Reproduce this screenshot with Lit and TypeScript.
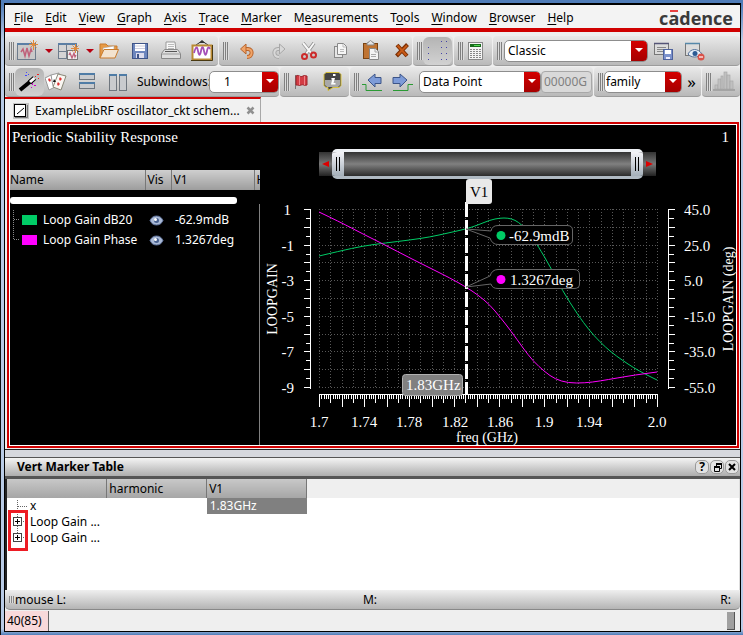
import { LitElement, html, svg, css } from "lit";
import { customElement, property } from "lit/decorators.js";

const range = (n: number) => Array.from({ length: n }, (_, i) => i);

const icons: Record<string, any> = {
  newWindow: svg`<rect x="1.500" y="3.500" width="18" height="16" fill="#c9c9c9" stroke="#6e7c8c"/><path d="M1 4h19" stroke="#5b7fa5" stroke-width="2"/><path d="M5 12l2-3 2 7 2-8 2 8 2-7 1 3" fill="none" stroke="#c0607a" stroke-width="1.500"/><path d="M17.500 0v10M13 4.500h9M14.500 1.500l6 6M20.500 1.500l-6 6" stroke="#e08a3c"/>`,
  newSub: svg`<rect x="1.500" y="3.500" width="18" height="15" fill="#d4d4d4" stroke="#6e7c8c"/><path d="M1 4h19" stroke="#5b7fa5" stroke-width="2"/><path d="M9.500 4v14M2 11.500h18" stroke="#6e7c8c"/><rect x="10.500" y="10.500" width="10" height="9" fill="#eee" stroke="#777"/><path d="M12 15l1-2 2 5 2-5 1 4 1-2" fill="none" stroke="#c0607a" stroke-width="1.300"/><path d="M18.500 4v9M14 8.500h8M15.500 5.500l6 6M21.500 5.500l-6 6" stroke="#e08a3c"/>`,
  folder: svg`<path d="M2 18V4h6l2 2h9v4" fill="#e79a45" stroke="#c97b2c"/><path d="M5 8l11-2v8H5z" fill="#fff" stroke="#aaa" stroke-width=".6"/><path d="M2 18L6 9.500h14.500L17 18z" fill="#f3e3cf" stroke="#c97b2c"/>`,
  save: svg`<rect x="3.500" y="3.500" width="15" height="15" fill="#6d86bd" stroke="#3f5488"/><rect x="6" y="4" width="10" height="7" fill="#fff"/><path d="M6 6h10M6 8.500h10" stroke="#ccd"/><rect x="7" y="13" width="8" height="5" fill="#dde"/><rect x="8" y="14" width="2" height="4" fill="#3f5488"/>`,
  print: svg`<path d="M6 11V2h9l1 9z" fill="#f8f8f8" stroke="#999"/><path d="M8 4.500h6M8 6.500h6M8 8.500h6" stroke="#bbb"/><path d="M1.500 13.500l3-4h13l3 4v5h-19z" fill="#dedede" stroke="#888"/><path d="M2 14h18" stroke="#999"/><path d="M5 11.500h12" stroke="#555"/>`,
  picture: svg`<path d="M5 5l6-4 6 4" stroke="#333" fill="none"/><path d="M8 3l3-3 3 3z" fill="#333"/><rect x="1.500" y="5.500" width="19" height="14" fill="#fff" stroke="#b98a34" stroke-width="2"/><path d="M0 20.500h21.500V5" stroke="#4a3a12" fill="none"/><path d="M3 13c2-7 3-7 4-2s2 5 3 0 2-5 3 0 2 5 3 0 2-4 3-2" fill="none" stroke="#a450b8" stroke-width="1.800"/>`,
  undo: svg`<path d="M7 9h5c5 0 5 8-1 8" fill="none" stroke="#b8642c" stroke-width="4"/><path d="M7 9h5c5 0 5 8-1 8" fill="none" stroke="#f0a468" stroke-width="2"/><path d="M4.500 9l5.500-5v10z" fill="#f0a468" stroke="#b8642c"/>`,
  redo: svg`<path d="M16 9h-5c-5 0-5 8 1 8" fill="none" stroke="#a8a8a8" stroke-width="4"/><path d="M16 9h-5c-5 0-5 8 1 8" fill="none" stroke="#d8d8d8" stroke-width="2"/><path d="M18 9l-5.500-5v10z" fill="#d8d8d8" stroke="#a8a8a8"/>`,
  cut: svg`<path d="M5 3l9 11M16 3L8 14" stroke="#8a8a8a" stroke-width="3.500"/><path d="M5 3l9 11M16 3L8 14" stroke="#f8f8f8" stroke-width="2"/><circle cx="6.500" cy="16.500" r="2.500" fill="none" stroke="#cc2a2a" stroke-width="2"/><circle cx="15.500" cy="15" r="2.500" fill="none" stroke="#cc2a2a" stroke-width="2"/>`,
  copy: svg`<rect x="5.500" y="6.500" width="8" height="11" fill="#e6e6e6" stroke="#888"/><path d="M8.500 3.500h6l3 3v8h-9z" fill="#f6f6f6" stroke="#888"/><path d="M14 4v3h3M11 9.500h4M11 11.500h4" stroke="#bbb" fill="none"/>`,
  paste: svg`<rect x="3.500" y="3.500" width="14" height="15" fill="#bf7433" stroke="#7a4312"/><path d="M7 5V3l2-1c1-2 2-2 3 0l2 1v2z" fill="#e4e4e4" stroke="#888"/><path d="M9.500 8.500h6l3 3v8h-9z" fill="#f4f4f4" stroke="#888"/><path d="M15 9v3h3M11 14.500h5M11 16.500h5" stroke="#aaa" fill="none"/>`,
  remove: svg`<path d="M6 5l10 11M16.500 4.500L5.500 16" stroke="#7c2f04" stroke-width="4"/><path d="M6.500 5.500l9 10M16 5.500L6.500 15" stroke="#c75a17" stroke-width="2"/>`,
  grid: svg`<g fill="#4444a8">${[[18, 0], [13, 0], [0, 6], [13, 6], [18, 6], [0, 12], [13, 12], [18, 12], [0, 18], [13, 18], [18, 18]].map(([x, y]) => svg`<rect x=${x + 2} y=${y + 1} width="1" height="1"/>`)}</g>`,
  calc: svg`<rect x="3.500" y="2.500" width="14" height="17" fill="#f4f4f4" stroke="#888"/><rect x="5" y="4" width="11" height="3" fill="#176b1c"/><path d="M9 5.500h6" stroke="#5d5"/><g stroke="#888" stroke-dasharray="2 1">${[9.5, 11.5, 13.5, 15.5, 17.5].map((y) => svg`<path d="M5 ${y}h11"/>`)}</g>`,
  formSave: svg`<rect x="1.500" y="3.500" width="14" height="11" fill="#dcdcdc" stroke="#777"/><path d="M1 3.500h15" stroke="#557" stroke-width="1.500"/><path d="M4 7.500h9M4 9.500h9M4 11.500h6" stroke="#888"/><rect x="10.500" y="9.500" width="9" height="10" fill="#7c92cc" stroke="#4e629c"/><path d="M12 10h6v4h-6z" fill="#fff"/><path d="M13 17h4v2h-4z" fill="#eef"/>`,
  formEye: svg`<rect x="1.500" y="3.500" width="14" height="12" fill="#dcdcdc" stroke="#777"/><path d="M1 3.500h15" stroke="#58a" stroke-width="1.500"/><path d="M4 14c3-6 10-6 14 0-4 4-11 4-14 0z" fill="#e6eef8" stroke="#56739b"/><circle cx="11" cy="13.500" r="2.500" fill="#2c5a94"/><circle cx="17" cy="17" r="3.500" fill="#d9534a"/><path d="M15 17h4" stroke="#fff" stroke-width="1.200"/>`,
  wand: svg`<path d="M2 19L13 10" stroke="#000" stroke-width="4"/><path d="M11.500 11.500l5-4.500" stroke="#000" stroke-width="5"/><path d="M12 11l4.500-4" stroke="#fff" stroke-width="3"/><g fill="#44f"><rect x="8" y="1" width="1" height="1"/><rect x="10" y="3" width="1" height="1"/><rect x="7" y="4" width="2" height="1"/></g><g fill="#e22"><rect x="19" y="3" width="2" height="1"/><rect x="17" y="5" width="1" height="1"/><rect x="20" y="7" width="1" height="1"/></g><g fill="#c0c"><rect x="14" y="12" width="1" height="2"/><rect x="16" y="14" width="2" height="1"/><rect x="13" y="16" width="1" height="1"/></g>`,
  cards: svg`<path d="M0 7l6-3 4 12-6 3z" fill="#fff" stroke="#999"/><path d="M6 4l8-2v12l-6 1z" fill="#fff" stroke="#999"/><path d="M13 3l8 2-5 14-8-3z" fill="#faf6f2" stroke="#887"/><path d="M4 7l2 2-1 2-2-2zM15 6l2 2-2 2-1-2zM13 11l2 2-2 2-1-2z" fill="#d33"/><path d="M9 8l2 3H8z" fill="#111"/>`,
  rows: svg`<g fill="#c9cbce" stroke="#6f767e"><rect x="3.500" y="2.500" width="15" height="6"/><rect x="3.500" y="11.500" width="15" height="6"/></g><path d="M3 3h16M3 12h16" stroke="#4f7ca6" stroke-width="2"/>`,
  cols: svg`<g fill="#c9cbce" stroke="#6f767e"><rect x="2.500" y="3.500" width="7" height="16"/><rect x="12.500" y="3.500" width="7" height="16"/></g><path d="M2 4h8M12 4h8" stroke="#4f7ca6" stroke-width="2"/>`,
  flag: svg`<path d="M4.500 4v14" stroke="#777"/><path d="M5 5c3-2 4 2 7 0 2-1 3 0 4 0v9c-3 1-4-1-6 0s-3 0-5 0z" fill="#d23c44" stroke="#9b2228"/><path d="M8.500 5v9M13.500 5v9" stroke="#ee8288"/>`,
  info: svg`<path d="M4 1.500h13l2 2v11l-2 2h-6l-5 3v-3H4l-2-2v-11z" fill="#444" stroke="#d9c23c"/><path d="M3 9h15v5l-2 2H5l-2-2z" fill="#a8a8a8"/><path d="M11 3h2.500v2H11zM9.500 7h3.500l-1.500 5h2v1.500H9l1.200-5h-1z" fill="#fff"/>`,
  back: svg`<path d="M1 13.500h4v6h16" fill="none" stroke="#2a9a34"/><path d="M7 9l7-6v3.500h6v6h-6V16z" fill="#7d9bd8" stroke="#3c5488"/>`,
  forward: svg`<path d="M1 19.500h15v-6h5" fill="none" stroke="#2a9a34"/><path d="M15 9L8 3v3.500H1v6h7V16z" fill="#7d9bd8" stroke="#3c5488"/>`,
  histogram: svg`<path d="M0 19h22" stroke="#a4a4a4" stroke-width="2"/><g fill="#c0c0c0" stroke="#a4a4a4" stroke-width=".6"><rect x="2" y="14" width="3" height="4"/><rect x="5" y="8" width="3" height="10"/><rect x="8" y="5" width="2" height="13"/><rect x="11" y="1" width="3" height="17"/><rect x="14" y="4" width="3" height="14"/><rect x="17" y="10" width="3" height="8"/></g>`,
};

const tool = (name: string, label: string, cls = "") =>
  html`<button class="tool ${cls}" aria-label=${label}><svg viewBox="0 0 22 22" width="22" height="22" fill="none" aria-hidden="true">${icons[name]}</svg></button>`;
const arrow = (label: string) =>
  html`<button class="arrow" aria-label=${label}><svg width="8" height="4" aria-hidden="true"><path d="M0 0h8l-4 4z" fill="#b80010"/></svg></button>`;

const controls = css`
  :host { display: block; }
  button { border: 0; padding: 0; margin: 0; background: none; font: inherit; color: inherit; }
  svg { display: block; flex: none; }
`;

@customElement("drop-list")
export class DropList extends LitElement {
  @property() label = "";
  @property() value = "";
  static styles = css`
    :host { display: block; position: relative; height: 22px; }
    select {
      appearance: none; box-sizing: border-box; width: 100%; height: 22px; border: 1px solid #8d8d8d;
      border-radius: 5px; background: #fff; color: #000; font: inherit; padding: 0 18px 0 var(--inset, 3px);
    }
    .cap {
      position: absolute; right: 1px; top: 1px; bottom: 1px; width: 16px; pointer-events: none;
      background: linear-gradient(#d40000, #a60000); border-radius: 0 4px 4px 0; display: grid; place-items: center;
    }
  `;
  render() {
    return html`<select aria-label=${this.label}><option>${this.value}</option></select>
      <span class="cap"><svg width="8" height="5" aria-hidden="true"><path d="M0 0h8l-4 4z" fill="#fff"/></svg></span>`;
  }
}

@customElement("menu-bar")
export class MenuBar extends LitElement {
  static styles = [controls, css`
    nav { display: flex; align-items: center; height: 21px; padding: 2px 7px 0 9px; gap: 12px; background: #f3f3f3; border-bottom: 4px solid #d00000; }
    u { text-underline-offset: 2px; }
    .logo { margin-left: auto; font: bold 18px/20px "Open Sans", sans-serif; color: #3a3a3a; }
    .bar { position: relative; }
    .bar::before { content: ""; position: absolute; left: 2px; right: 1px; top: 4px; height: 2px; background: #e84040; }
  `];
  items: [string, number][] = [["File", 0], ["Edit", 0], ["View", 0], ["Graph", 0], ["Axis", 0], ["Trace", 0], ["Marker", 0], ["Measurements", 1], ["Tools", 1], ["Window", 0], ["Browser", 0], ["Help", 0]];
  render() {
    return html`<nav>
      ${this.items.map(([t, k]) => html`<button>${t.slice(0, k)}<u>${t[k]}</u>${t.slice(k + 1)}</button>`)}
      <span class="logo">c<span class="bar">a</span>dence</span>
    </nav>`;
  }
}

@customElement("tool-bars")
export class ToolBars extends LitElement {
  static styles = [controls, css`
    :host { padding-top: 4px; }
    .row { display: flex; gap: 1px; height: 30px; }
    .row + .row { margin-top: 1px; }
    .group {
      display: flex; align-items: center; box-sizing: border-box; flex: none; padding-left: 4px;
      border-bottom: 1px solid #9c9c9c; border-radius: 4px; background: linear-gradient(#e9e9e9, #b9b9b9);
    }
    .set { display: flex; }
    .spaced { gap: 6px; }
    .fill { flex: 1; }
    .grip { width: 6px; height: 18px; flex: none; background: repeating-linear-gradient(90deg, #808080 0 1px, #dcdcdc 1px 2px); }
    .tool { width: 25px; height: 28px; padding-left: 1px; display: grid; align-items: center; justify-items: start; flex: none; }
    .arrow { width: 16px; height: 28px; padding-left: 5px; flex: none; }
    .pressed { width: 29px; padding-left: 3px; border-radius: 6px; background: linear-gradient(#b4b4b4, #d2d2d2); }
    .a1 { width: 213px; } .b1 { width: 193px; } .c1 { width: 40px; } .d1 { width: 38px; }
    .a2 { width: 274px; } .b2 { width: 69px; } .c2 { width: 243px; } .d2 { width: 107px; }
    .wide { width: 144px; margin: 0 4px 0 1px; }
    .count { width: 70px; --inset: 14px; flex: none; }
    .points { width: 122px; margin-left: 3px; }
    .fam { width: 84px; --inset: 1px; }
    .field {
      width: 51px; height: 22px; box-sizing: border-box; border: 1px solid #a8a8a8; border-radius: 4px; padding: 0 2px;
      background: #d9d9d9; color: #808080; font: inherit;
    }
    .more { width: 20px; font-size: 17px; line-height: 20px; }
    .label { padding-left: 6px; width: 78px; box-sizing: border-box; white-space: nowrap; flex: none; }
  `];
  render() {
    const grip = html`<span class="grip"></span>`;
    return html`
      <div class="row" role="toolbar" aria-label="Main">
        <div class="group a1">
          ${grip}${tool("newWindow", "New window")}${arrow("New window options")}${tool("newSub", "New subwindow")}${arrow("Subwindow options")}
          <div class="set spaced">
            ${tool("folder", "Open")}${tool("save", "Save")}${tool("print", "Print")}${tool("picture", "Save image")}
          </div>
        </div>
        <div class="group b1 spaced">
          ${grip}<div class="set spaced">${tool("undo", "Undo")}${tool("redo", "Redo")}${tool("cut", "Cut")}${tool("copy", "Copy")}${tool("paste", "Paste")}${tool("remove", "Delete")}</div>
        </div>
        <div class="group c1">${grip}${tool("grid", "Grid", "pressed")}</div>
        <div class="group d1">${grip}${tool("calc", "Calculator")}</div>
        <div class="group fill">
          ${grip}<drop-list class="wide" label="Workspace" value="Classic"></drop-list>
          <div class="set spaced">${tool("formSave", "Save workspace")}${tool("formEye", "Hide workspace")}</div>
        </div>
      </div>
      <div class="row" role="toolbar" aria-label="Windows">
        <div class="group a2">
          ${grip}${tool("wand", "Assistant", "pressed")}
          <div class="set spaced">${tool("cards", "Cards")}${tool("rows", "Split rows")}${tool("cols", "Split columns")}</div>
          <span class="label">Subwindows:</span>
          <drop-list class="count" label="Subwindows" value="1"></drop-list>
        </div>
        <div class="group b2">${grip}<div class="set spaced">${tool("flag", "Flag")}${tool("info", "Information")}</div></div>
        <div class="group c2">
          ${grip}<div class="set spaced">${tool("back", "Previous point")}${tool("forward", "Next point")}</div>
          <drop-list class="points" label="Step by" value="Data Point"></drop-list>
          <input class="field" aria-label="Step" value="00000G" disabled />
        </div>
        <div class="group d2">${grip}<drop-list class="fam" label="Group by" value="family"></drop-list><button class="more" aria-label="More tools">»</button></div>
        <div class="group fill">${grip}${tool("histogram", "Histogram")}</div>
      </div>`;
  }
}

const X0 = 319, X1 = 657, Y0 = 209, Y1 = 387;
type Point = [number, number];
const gain: Point[] = [[319, 256], [340, 251], [363, 246], [385, 243], [410, 240], [430, 237], [448, 233], [466, 229], [478, 225], [490, 220], [500, 218], [508, 218], [515, 220], [522, 225], [530, 234], [538, 246], [551, 268], [562, 290], [578, 315], [589, 330], [600, 342], [611, 352], [622, 360], [634, 368], [645, 374], [657, 380]];
const phase: Point[] = [[319, 212], [340, 222], [363, 234], [385, 245], [410, 258], [430, 268], [450, 278], [466, 287], [478, 295], [490, 305], [500, 317], [511, 331], [523, 348], [533, 361], [545, 372], [555, 379], [568, 383], [585, 383], [600, 381], [617, 378], [635, 375], [657, 372]];

/** Smooth curve through the midpoints of consecutive samples. */
const curve = (p: Point[]) =>
  `M${p[0]}` + p.slice(1, -1).map(([x, y], i) => {
    const [nx, ny] = p[i + 2];
    return `Q${x} ${y} ${(x + nx) / 2} ${(y + ny) / 2}`;
  }).join("") + `L${p[p.length - 1]}`;

@customElement("trace-plot")
export class TracePlot extends LitElement {
  static styles = [controls, css`
    .top { display: flex; justify-content: flex-end; padding: 4px 7px 0; height: 20px; }
    .zoom { display: flex; align-items: center; margin: 0 80px 0 59px; height: 30px; }
    .end { width: 13px; height: 24px; flex: none; display: grid; place-items: center; background: linear-gradient(#333, #777 50%, #222); }
    .track {
      flex: 1; display: flex; justify-content: space-between; height: 30px; box-sizing: border-box; border: solid #b0bac3;
      border-width: 3px 0; border-top-color: #eef1f5; border-radius: 5px; overflow: hidden; background: linear-gradient(#333, #808080 50%, #2c2c2c);
    }
    .thumb { width: 12px; height: 24px; display: grid; place-items: center; background: linear-gradient(#f4f4f8, #a4afb9); }
    .plot { width: 100%; height: auto; font-size: 15px; fill: #fff; }
    .dots { stroke: #585858; stroke-dasharray: 1 2; }
    .axis { stroke: #fff; fill: none; }
    .gain { stroke: #0c6; fill: none; }
    .phase { stroke: #f0f; fill: none; }
    .callout { fill: #000; stroke: #666; }
    .small { font-size: 14px; }
  `];
  render() {
    const bars = html`<svg width="6" height="14" aria-hidden="true"><path d="M1.500 0v14M4.500 0v14" stroke="#000"/></svg>`;
    const px = (i: number, n: number) => Math.round(X0 + ((X1 - X0) * i) / n) + 0.5;
    const py = (i: number, n: number) => Math.round(Y0 + ((Y1 - Y0) * i) / n) + 0.5;
    return html`
      <div class="top">1</div>
      <div class="zoom">
        <button class="end" aria-label="Scroll left"><svg width="7" height="6"><path d="M0 3l7-3v6z" fill="#d00"/></svg></button>
        <div class="track"><button class="thumb" aria-label="Range start">${bars}</button><button class="thumb" aria-label="Range end">${bars}</button></div>
        <button class="end" aria-label="Scroll right"><svg width="7" height="6"><path d="M7 3l-7-3v6z" fill="#d00"/></svg></button>
      </div>
      <svg class="plot" viewBox="260 179 476 266" role="img" aria-label="Loop gain and phase against frequency">
        <g class="dots">
          ${range(31).map((i) => svg`<path d="M${px(i, 30)} ${Y0}V${Y1}"/>`)}
          ${range(11).map((i) => svg`<path d="M${X0} ${py(i, 10)}H${X1}"/>`)}
        </g>
        <g class="axis">
          <path d="M310.500 209V389M668.500 209V389"/>
          ${range(21).map((i) => svg`<path d="M${i % 2 ? 306 : 304} ${py(i, 20)}H310M669 ${py(i, 20)}H${i % 2 ? 674 : 675}"/>`)}
          <path d="M319 394.500H658"/>
          ${range(151).map((i) => svg`<path d="M${px(i, 150)} 395V${i % 10 === 0 ? 407 : i % 5 === 0 ? 403 : 399}"/>`)}
        </g>
        <path class="gain" d=${curve(gain)}/>
        <path class="phase" d=${curve(phase)}/>
        <path d="M466.500 202V395" stroke="#fff" stroke-width="3" stroke-dasharray="15 3"/>
        <path class="callout" d="M466 229L491 231Q492 225.500 498 225.500H567Q572.500 225.500 572.500 230V240Q572.500 244.500 567 244.500H498Q492 244.500 490 238Z"/>
        <path class="callout" d="M466 287L490 276Q492 269.500 498 269.500H574Q579.500 269.500 579.500 275V284Q579.500 288.500 574 288.500H498Q492 288.500 491 284Z"/>
        <circle cx="501" cy="235.500" r="4.500" fill="#0c6"/>
        <circle cx="501" cy="279.500" r="4.500" fill="#f0f"/>
        <text x="509" y="241">-62.9mdB</text>
        <text x="510" y="285">1.3267deg</text>
        <path d="M466 182Q466 179 469 179H489Q492 179 492 182V201Q492 204 489 204H466Z" fill="#e9e9e9"/>
        <text x="470" y="197" fill="#000">V1</text>
        <rect x="402.500" y="374.500" width="60" height="21" rx="3" fill="#808080" stroke="#b0b0b0"/>
        <text x="406" y="390">1.83GHz</text>
        ${["1", "-1", "-3", "-5", "-7", "-9"].map((t, i) => svg`<text x=${i ? 294 : 291} y=${Math.round(215 + i * 35.6)} text-anchor="end">${t}</text>`)}
        ${["45.0", "25.0", "5.0", "-15.0", "-35.0", "-55.0"].map((t, i) => svg`<text x="684" y=${Math.round(215 + i * 35.6)}>${t}</text>`)}
        ${[["1.7", 319], ["1.74", 364], ["1.78", 409], ["1.82", 455], ["1.86", 500], ["1.9", 544], ["1.94", 589], ["2.0", 657]].map(([t, x]) => svg`<text x=${x} y="427" text-anchor="middle">${t}</text>`)}
        <text x="487" y="442" text-anchor="middle" class="small">freq (GHz)</text>
        <text class="small" text-anchor="middle" transform="translate(277 299) rotate(-90)">LOOPGAIN</text>
        <text class="small" text-anchor="middle" transform="translate(733 299) rotate(-90)">LOOPGAIN (deg)</text>
      </svg>`;
  }
}

@customElement("trace-window")
export class TraceWindow extends LitElement {
  static styles = [controls, css`
    .tabs { display: flex; height: 25px; background: #efefef; }
    .tab {
      display: flex; align-items: center; gap: 6px; box-sizing: border-box; width: 256px; padding: 0 9px 0 8px;
      border-top: 2px solid #d00000; border-right: 1px solid #a8a8a8; background: #f1f1f1; white-space: nowrap;
    }
    .tab button { margin-left: auto; }
    .frame {
      display: grid; grid-template-columns: 250px 1fr; margin: 0 1px 1px 2px; border: 2px solid #d00000; outline: 1px solid #fff; outline-offset: -3px;
      background: #000; color: #fff; font-family: "Liberation Serif", serif; font-size: 15px; line-height: 16px; padding: 1px;
    }
    .list { display: flex; flex-direction: column; }
    h2 { margin: 0; padding: 4px 2px 0; height: 41px; font-size: 15px; font-weight: normal; }
    table { border-collapse: collapse; table-layout: fixed; width: 100%; font: 12px/20px "Noto Sans", sans-serif; }
    th { height: 20px; padding: 0 0 0 2px; font-weight: normal; text-align: left; color: #000; overflow: hidden; white-space: nowrap; background: linear-gradient(#cfcfcf, #9d9d9d); border-left: 1px solid #777; }
    th:first-child { border: 0; padding: 0; }
    .head { margin-bottom: 7px; }
    .n { width: 135px; } .v { width: 26px; } .m { width: 83px; }
    td { padding: 0 0 0 4px; height: 20px; white-space: nowrap; }
    .rule { width: 227px; height: 7px; background: #fff; border-radius: 3px; }
    .body { flex: 1; border-right: 1px solid #808080; padding-top: 6px; }
    .name { display: flex; align-items: center; }
    .swatch { width: 15px; height: 10px; margin-right: 6px; }
    td.trace { padding: 0; }
  `];
  @property({ attribute: false }) rows = [["#00cc66", "Loop Gain dB20", "-62.9mdB"], ["#ff00ff", "Loop Gain Phase", "1.3267deg"]];
  render() {
    const cols = html`<colgroup><col class="n" /><col class="v" /><col class="m" /><col /></colgroup>`;
    return html`
      <div class="tabs"><div class="tab">
        <svg width="16" height="16" viewBox="0 0 16 16" aria-hidden="true"><path d="M0 0h16v16H0z" fill="#c4c4c4"/><rect x="1.500" y="1.500" width="11" height="12" fill="#fff" stroke="#000"/><path d="M4 11l7-6" stroke="#000"/><path d="M2 14.500h12.500V2" stroke="#777" fill="none"/></svg>
        <span>ExampleLibRF oscillator_ckt schem...</span>
        <button aria-label="Close tab"><svg width="10" height="10"><path d="M1.500 1.500l6 6M7.500 1.500l-6 6" stroke="#909090" stroke-width="2.500"/></svg></button>
      </div></div>
      <div class="frame">
        <section class="list">
          <h2>Periodic Stability Response</h2>
          <table class="head">${cols}<tr><th>Name</th><th>Vis</th><th>V1</th><th>H</th></tr></table>
          <div class="rule"></div>
          <div class="body"><table>${cols}
            ${this.rows.map(([color, name, value]) => html`<tr>
              <td class="trace"><span class="name">
                <svg width="12" height="20" aria-hidden="true"><path d="M3.500 0v${color === "#ff00ff" ? 10 : 20}M4 9.500h5" stroke="#888" stroke-dasharray="1 1" fill="none"/></svg>
                <span class="swatch" style="background:${color}"></span>${name}</span></td>
              <td><svg width="15" height="11" aria-label="Visible"><path d="M1 5.500Q3 1 7.500 1T14 5.500Q12 10 7.500 10T1 5.500z" fill="#a9b9d6" stroke="#5c6f98"/><circle cx="7.500" cy="5.500" r="2.500" fill="#49618f"/><circle cx="6.500" cy="4.500" r="1.500" fill="#fff"/></svg></td>
              <td>${value}</td><td></td></tr>`)}
          </table></div>
        </section>
        <trace-plot></trace-plot>
      </div>`;
  }
}

@customElement("marker-panel")
export class MarkerPanel extends LitElement {
  static styles = [controls, css`
    .split { height: 7px; background: #d6d8de; border-top: 1px solid #222; }
    .title { display: flex; align-items: center; height: 18px; padding: 0 1px 0 12px; border: solid #555; border-width: 1px 0 3px; background: linear-gradient(#f4f4f4, #adadad); font-weight: bold; }
    .win { width: 14px; height: 14px; margin-left: 1px; border: 1px solid #999; border-radius: 5px; box-sizing: border-box; background: #e2e2e2; display: grid; place-items: center; font-size: 12px; line-height: 12px; }
    .win:first-of-type { margin-left: auto; }
    .area { position: relative; height: 111px; background: #fff; border-left: 2px solid #222; border-right: 1px solid #ddd; }
    .area::before { content: ""; display: block; height: 19px; margin-bottom: -19px; background: #efefef; }
    table { position: relative; border-collapse: collapse; table-layout: fixed; width: 300px; line-height: 16px; }
    th { height: 19px; box-sizing: border-box; padding: 0 0 0 2px; text-align: left; font-weight: normal; background: linear-gradient(#c8c8c8, #a6a6a6); border-right: 1px solid #777; }
    td { height: 16px; padding: 0 0 0 3px; white-space: nowrap; }
    td:first-child { padding: 0; }
    .chosen { background: #808080; color: #fff; }
    .node { display: flex; align-items: center; height: 16px; }
    .mark { position: absolute; left: 1px; top: 31px; width: 20px; height: 41px; box-sizing: border-box; border: 3px solid #ed1c24; }
  `];
  branch(last: boolean) {
    return html`<svg width="23" height="16" aria-hidden="true"><path d="M10.500 0v${last ? 5 : 16}M16 7.500h5" stroke="#666" stroke-dasharray="1 1" fill="none"/><rect x="6.500" y="3.500" width="8" height="8" fill="#fff" stroke="#444"/><path d="M8 7.500h5M10.500 5v5" stroke="#000"/></svg>`;
  }
  render() {
    return html`
      <div class="split"></div>
      <div class="title"><span>Vert Marker Table</span>
        <button class="win" aria-label="Help">?</button>
        <button class="win" aria-label="Restore"><svg width="9" height="9"><path d="M3.500 3V1.500h5v4H7M1.500 4.500h5v4h-5z" fill="none" stroke="#000"/><path d="M3 1h6M1 4h6" stroke="#000" stroke-width="2"/></svg></button>
        <button class="win" aria-label="Close"><svg width="8" height="8"><path d="M1 1l6 6M7 1L1 7" stroke="#000" stroke-width="2"/></svg></button>
      </div>
      <div class="area">
        <table>
          <tr><th></th><th>harmonic</th><th>V1</th></tr>
          <tr><td><span class="node"><svg width="23" height="16" aria-hidden="true"><path d="M10.500 2v14M11 8.500h10" stroke="#666" stroke-dasharray="1 1" fill="none"/></svg>x</span></td><td></td><td class="chosen">1.83GHz</td></tr>
          <tr><td><span class="node">${this.branch(false)}Loop Gain ...</span></td><td></td><td></td></tr>
          <tr><td><span class="node">${this.branch(true)}Loop Gain ...</span></td><td></td><td></td></tr>
        </table>
        <span class="mark"></span>
      </div>`;
  }
}

@customElement("app-root")
export class AppRoot extends LitElement {
  static styles = css`
    :host {
      display: block; background: linear-gradient(#4f7cb8 0 4px, #b9cbe6 40px, #b9cbe6 calc(100% - 6px), #4f7cb8); padding: 3px 2px 3px 3px;
      border-left: 1px solid #111; font: 12px/16px "Noto Sans", sans-serif; color: #000;
    }
    .window { border: 1px solid #000; border-top-width: 2px; background: #efefef; }
    .mouse { display: grid; grid-template-columns: 1fr auto 1fr; align-items: center; height: 19px; padding: 0 9px 0 4px; background: linear-gradient(#efefef, #b4b4b4); border-bottom: 1px solid #888; border-radius: 0 0 5px 5px; }
    .left { display: flex; align-items: center; }
    .grip { width: 6px; height: 7px; background: repeating-linear-gradient(90deg, #888 0 1px, #ddd 1px 2px); }
    .right { text-align: right; }
    .foot { display: flex; align-items: center; justify-content: space-between; height: 21px; padding-right: 5px; }
    .count { width: 44px; line-height: 20px; padding-left: 2px; box-sizing: border-box; background: #f8d9da; border-right: 1px solid #666; }
    .size { width: 7px; height: 17px; background: #a0a0a0; border: solid #555; border-width: 0 1px 1px 0; }
  `;
  render() {
    return html`<div class="window">
      <menu-bar></menu-bar>
      <tool-bars></tool-bars>
      <trace-window></trace-window>
      <marker-panel></marker-panel>
      <div class="mouse"><span class="left"><span class="grip"></span>mouse L:</span><span>M:</span><span class="right">R:</span></div>
      <div class="foot"><span class="count">40(85)</span><span class="size"></span></div>
    </div>`;
  }
}
